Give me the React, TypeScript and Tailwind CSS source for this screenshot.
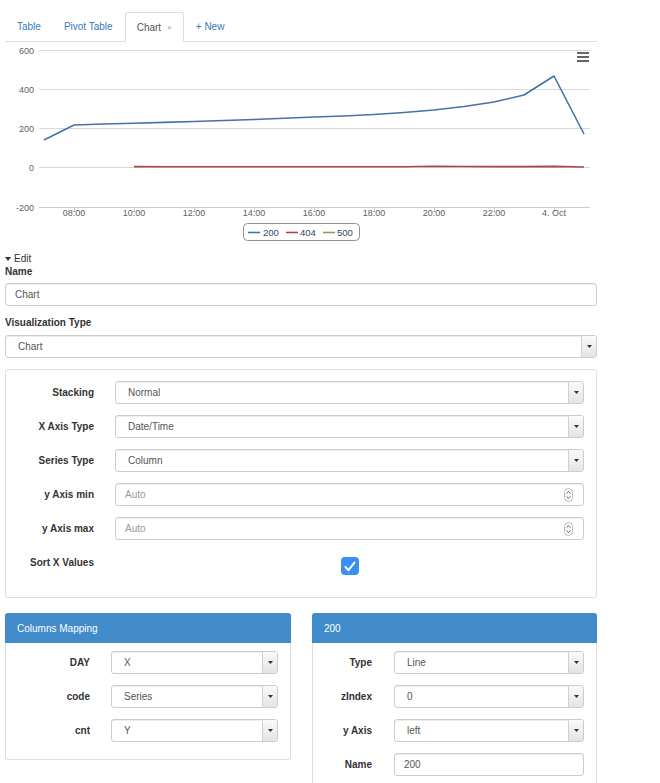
import React from 'react'

const blueLine: [number, number][] = [
  [44, 140], [74, 125], [104, 124], [134, 123.2], [164, 122.4], [194, 121.5], [224, 120.5],
  [254, 119.5], [284, 118.3], [314, 117], [344, 116], [374, 114.5], [404, 112.5], [434, 110],
  [464, 106.5], [494, 102], [524, 95], [554, 76], [584, 134],
]

const redLine: [number, number][] = [
  [134, 166.6], [164, 166.8], [194, 166.8], [224, 166.8], [254, 166.8], [284, 166.8], [314, 166.8],
  [344, 166.8], [374, 166.8], [404, 166.8], [434, 166.3], [464, 166.5], [494, 166.6], [524, 166.6],
  [554, 166.4], [584, 167],
]

const yTicks = [
  { y: 50, label: '600' },
  { y: 89, label: '400' },
  { y: 128, label: '200' },
  { y: 167, label: '0' },
]

const xTicks = [
  { x: 74, label: '08:00' },
  { x: 134, label: '10:00' },
  { x: 194, label: '12:00' },
  { x: 254, label: '14:00' },
  { x: 314, label: '16:00' },
  { x: 374, label: '18:00' },
  { x: 434, label: '20:00' },
  { x: 494, label: '22:00' },
  { x: 554, label: '4. Oct' },
]

function pts(list: [number, number][]) {
  return list.map(p => p.join(',')).join(' ')
}

function Chart() {
  return (
    <div className="h-[205px]">
      <svg width="592" height="205" className="block font-['Liberation_Sans',sans-serif]">
        <g transform="translate(-5,-42)">
          {yTicks.map(t => (
            <g key={t.label}>
              <line x1="39" x2="590" y1={t.y + 0.5} y2={t.y + 0.5} stroke="#d8d8d8" />
              <text x="34" y={t.y + 3.5} textAnchor="end" fontSize="9" fill="#606060">{t.label}</text>
            </g>
          ))}
          <line x1="39" x2="590" y1="207.5" y2="207.5" stroke="#c0d0e0" />
          <text x="34" y="210.5" textAnchor="end" fontSize="9" fill="#606060">-200</text>
          {xTicks.map(t => (
            <g key={t.label}>
              <line x1={t.x + 0.5} x2={t.x + 0.5} y1="207" y2="212" stroke="#c0d0e0" />
              <text x={t.x} y="216" textAnchor="middle" fontSize="9" fill="#606060">{t.label}</text>
            </g>
          ))}
          <polyline points={pts(blueLine)} fill="none" stroke="#4572A7" strokeWidth="1.6" strokeLinejoin="round" />
          <polyline points={pts(redLine)} fill="none" stroke="#AA4643" strokeWidth="1.6" strokeLinejoin="round" />

          {/* export menu */}
          <g stroke="#666" strokeWidth="2">
            <line x1="577" x2="589" y1="53" y2="53" />
            <line x1="577" x2="589" y1="57" y2="57" />
            <line x1="577" x2="589" y1="61" y2="61" />
          </g>

          {/* legend */}
          <rect x="243.5" y="223.5" width="116" height="17" rx="4" fill="#fff" stroke="#909090" />
          <line x1="248" x2="260" y1="232.5" y2="232.5" stroke="#4572A7" strokeWidth="1.6" />
          <text x="263" y="236" fontSize="9.5" fill="#274b6d">200</text>
          <line x1="286" x2="298" y1="232.5" y2="232.5" stroke="#AA4643" strokeWidth="1.6" />
          <text x="300" y="236" fontSize="9.5" fill="#274b6d">404</text>
          <line x1="323" x2="335" y1="232.5" y2="232.5" stroke="#89A54E" strokeWidth="1.6" />
          <text x="337" y="236" fontSize="9.5" fill="#274b6d">500</text>
        </g>
      </svg>
    </div>
  )
}

function Select({ value }: { value: string }) {
  return (
    <div className="flex h-[23px] flex-1 items-stretch overflow-hidden rounded-[3px] border border-[#ccc] bg-white shadow-[inset_0_1px_1px_rgba(0,0,0,0.075)]">
      <span className="flex flex-1 items-center pl-[12px] text-[10px] text-[#555]">{value}</span>
      <span className="flex w-[15px] items-center justify-center border-l border-[#d0d0d0] bg-gradient-to-b from-[#fafafa] to-[#e4e4e4]">
        <svg width="5" height="3" viewBox="0 0 5 3">
          <path d="M0 0h5L2.5 3z" fill="#333" />
        </svg>
      </span>
    </div>
  )
}

function NumberInput({ placeholder }: { placeholder: string }) {
  return (
    <div className="flex h-[23px] flex-1 items-center rounded-[3px] border border-[#ccc] bg-white pl-[9px] pr-[10px] shadow-[inset_0_1px_1px_rgba(0,0,0,0.075)]">
      <span className="flex-1 text-[10px] text-[#999]">{placeholder}</span>
      <svg width="9" height="14" viewBox="0 0 9 14">
        <rect x="0.5" y="0.5" width="8" height="13" rx="4" fill="#fbfbfb" stroke="#bbb" />
        <path d="M2.5 5.5L4.5 3.5L6.5 5.5" fill="none" stroke="#555" strokeWidth="0.9" />
        <path d="M2.5 8.5L4.5 10.5L6.5 8.5" fill="none" stroke="#555" strokeWidth="0.9" />
      </svg>
    </div>
  )
}

function TextInput({ value }: { value: string }) {
  return (
    <div className="flex h-[23px] flex-1 items-center rounded-[3px] border border-[#ccc] bg-white pl-[9px] text-[10px] text-[#555] shadow-[inset_0_1px_1px_rgba(0,0,0,0.075)]">
      {value}
    </div>
  )
}

function Row({ label, labelW, gap, children }: { label: string; labelW: string; gap: string; children: React.ReactNode }) {
  return (
    <div className="flex h-[23px] items-center">
      <div className={`${labelW} text-right text-[10px] font-bold text-[#333]`}>{label}</div>
      <div className={`${gap} flex flex-1`}>{children}</div>
    </div>
  )
}

export default function App() {
  const tabs = ['Table', 'Pivot Table']

  return (
    <div className="h-[783px] w-[660px] overflow-hidden bg-white font-['Liberation_Sans',Arial,sans-serif] text-[10px] text-[#333]">
      <div className="ml-[5px] w-[592px]">
        {/* tabs */}
        <ul className="mt-[12px] flex h-[30px] border-b border-[#ddd] pl-px">
          {tabs.map(t => (
            <li key={t} className="mr-px flex h-[29px] items-center px-[11px] text-[10px] text-[#337ab7]">{t}</li>
          ))}
          <li className="mr-px -mb-px flex h-[30px] items-center rounded-t-[3px] border border-b-0 border-[#ddd] bg-white px-[11px] text-[10px] text-[#555]">
            Chart
            <span className="ml-[6px] text-[8px] text-[#999]">×</span>
          </li>
          <li className="flex h-[29px] items-center px-[11px] text-[10px] text-[#337ab7]">+ New</li>
        </ul>

        <Chart />

        <div className="mt-[5px] flex items-center leading-[13px]">
          <svg width="6" height="4" viewBox="0 0 6 4" className="mr-[3px]">
            <path d="M0 0h6L3 4z" fill="#333" />
          </svg>
          Edit
        </div>
        <div className="font-bold leading-[13px]">Name</div>
        <div className="mt-[5px] flex">
          <TextInput value="Chart" />
        </div>

        <div className="mt-[10px] font-bold leading-[13px]">Visualization Type</div>
        <div className="mt-[6px] flex">
          <Select value="Chart" />
        </div>

        {/* options well */}
        <div className="mt-[11px] flex flex-col gap-[11px] rounded-[3px] border border-[#ddd] pb-[23px] pr-[12px] pt-[11px]">
          <Row label="Stacking" labelW="w-[88px]" gap="ml-[21px]"><Select value="Normal" /></Row>
          <Row label="X Axis Type" labelW="w-[88px]" gap="ml-[21px]"><Select value="Date/Time" /></Row>
          <Row label="Series Type" labelW="w-[88px]" gap="ml-[21px]"><Select value="Column" /></Row>
          <Row label="y Axis min" labelW="w-[88px]" gap="ml-[21px]"><NumberInput placeholder="Auto" /></Row>
          <Row label="y Axis max" labelW="w-[88px]" gap="ml-[21px]"><NumberInput placeholder="Auto" /></Row>
          <div className="flex h-[23px] items-start">
            <div className="w-[88px] pt-[5px] text-right text-[10px] font-bold leading-[13px]">Sort X Values</div>
            <div className="ml-[21px] flex flex-1 justify-center pt-[6px]">
              <span className="flex h-[18px] w-[18px] items-center justify-center rounded-[4px] bg-[#3b8ff3]">
                <svg width="12" height="11" viewBox="0 0 12 11">
                  <path d="M1.5 6L4.5 9.2L10.5 1.5" fill="none" stroke="#fff" strokeWidth="2" strokeLinecap="round" strokeLinejoin="round" />
                </svg>
              </span>
            </div>
          </div>
        </div>

        {/* panels */}
        <div className="mt-[15px] flex items-start gap-[21px]">
          <div className="w-[286px]">
            <div className="flex h-[30px] items-center rounded-t-[3px] bg-[#428bca] pl-[12px] text-[10px] text-white">Columns Mapping</div>
            <div className="flex flex-col gap-[11px] rounded-b-[3px] border border-t-0 border-[#ddd] pb-[17px] pr-[12px] pt-[8px]">
              <Row label="DAY" labelW="w-[84px]" gap="ml-[21px]"><Select value="X" /></Row>
              <Row label="code" labelW="w-[84px]" gap="ml-[21px]"><Select value="Series" /></Row>
              <Row label="cnt" labelW="w-[84px]" gap="ml-[21px]"><Select value="Y" /></Row>
            </div>
          </div>
          <div className="w-[285px]">
            <div className="flex h-[30px] items-center rounded-t-[3px] bg-[#428bca] pl-[12px] text-[10px] text-white">200</div>
            <div className="flex flex-col gap-[11px] border border-t-0 border-[#ddd] pb-[17px] pr-[12px] pt-[8px]">
              <Row label="Type" labelW="w-[59px]" gap="ml-[22px]"><Select value="Line" /></Row>
              <Row label="zIndex" labelW="w-[59px]" gap="ml-[22px]"><Select value="0" /></Row>
              <Row label="y Axis" labelW="w-[59px]" gap="ml-[22px]"><Select value="left" /></Row>
              <Row label="Name" labelW="w-[59px]" gap="ml-[22px]"><TextInput value="200" /></Row>
            </div>
          </div>
        </div>
      </div>
    </div>
  )
}
